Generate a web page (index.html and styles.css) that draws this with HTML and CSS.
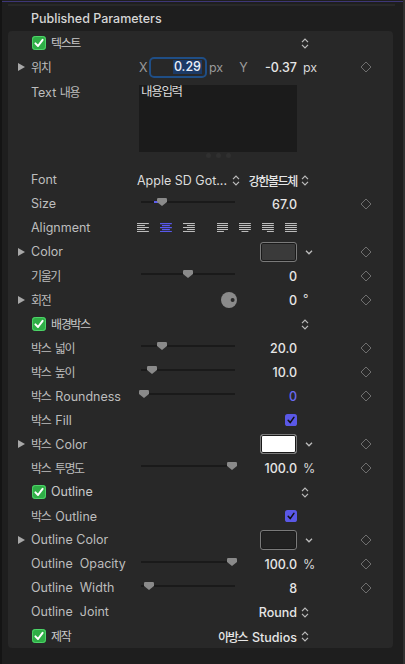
FILE: index.html
```html
<!DOCTYPE html>
<html lang="ko">
<head>
<meta charset="utf-8">
<link rel="stylesheet" href="styles.css">
</head>
<body>
<div class="frame">
  <div class="topline"></div>
  <div class="prevcard"></div>
  <div class="header">Published Parameters</div>
  <div class="card">

    <div class="row">
      <div class="lbl chk"><svg class="gcheck" width="14" height="14" viewBox="0 0 14 14"><rect x="0" y="0" width="14" height="14" rx="3.2" fill="#2fae46"/><rect x="0.5" y="0.5" width="13" height="13" rx="2.8" fill="none" stroke="#4fd46a" stroke-width="1"/><path d="M3.4 7.4 L6 10 L10.6 3.8" fill="none" stroke="#fff" stroke-width="2" stroke-linecap="round" stroke-linejoin="round"/></svg><span class="ko">텍스트</span></div>
      <div class="ext step"><svg width="8" height="11" viewBox="0 0 8 11"><path d="M1 4.2 L4 1.2 L7 4.2 M1 6.8 L4 9.8 L7 6.8" fill="none" stroke="#bdbdbd" stroke-width="1.2"/></svg></div>
    </div>

    <div class="row">
      <svg class="tri" width="7" height="8" viewBox="0 0 7 8"><path d="M0 0 L7 4 L0 8 Z" fill="#a8a8a8"/></svg>
      <div class="lbl"><span class="ko">위치</span></div>
      <div class="ctrl pos">
        <span class="axis">X</span>
        <span class="field"><span class="sel">0.29</span></span>
        <span class="unit">px</span>
        <span class="axis y">Y</span>
        <span class="val">-0.37</span>
      </div>
      <div class="ext">px</div>
      <div class="dia"><svg width="12" height="12" viewBox="0 0 12 12"><path d="M6 1 L11 6 L6 11 L1 6 Z" fill="none" stroke="#6e6e6e"/></svg></div>
    </div>

    <div class="textrow">
      <div class="lbl">Text <span class="ko">내용</span></div>
      <div class="tcol">
        <div class="tarea"><span class="ko tk">내용입력</span></div>
        <div class="dots"><i></i><i></i><i></i></div>
      </div>
    </div>

    <div class="row">
      <div class="lbl">Font</div>
      <div class="ctrl">
        <span class="pop">Apple SD Got...</span>
        <svg class="popchev" width="8" height="11" viewBox="0 0 8 11"><path d="M1 4.2 L4 1.2 L7 4.2 M1 6.8 L4 9.8 L7 6.8" fill="none" stroke="#bdbdbd" stroke-width="1.2"/></svg>
        <span class="val"><span class="ko">강한볼드체</span></span>
      </div>
      <div class="ext step"><svg width="8" height="11" viewBox="0 0 8 11"><path d="M1 4.2 L4 1.2 L7 4.2 M1 6.8 L4 9.8 L7 6.8" fill="none" stroke="#bdbdbd" stroke-width="1.2"/></svg></div>
    </div>

    <div class="row">
      <div class="lbl">Size</div>
      <div class="ctrl">
        <div class="slider"><div class="track"></div><div class="fill" style="left:13px;width:4px"></div><svg class="thumb" style="left:16px" width="10" height="8" viewBox="0 0 10 8"><path d="M0 1.2 Q0 0 1.2 0 H8.8 Q10 0 10 1.2 V4 L5 8 L0 4 Z" fill="#8a8a8a"/></svg></div>
        <span class="val">67.0</span>
      </div>
      <div class="dia"><svg width="12" height="12" viewBox="0 0 12 12"><path d="M6 1 L11 6 L6 11 L1 6 Z" fill="none" stroke="#6e6e6e"/></svg></div>
    </div>

    <div class="row">
      <div class="lbl">Alignment</div>
      <div class="ctrl align">
        <svg width="12" height="9" viewBox="0 0 12 9"><g fill="#c4c4c4"><rect x="0" y="0" width="12" height="1"/><rect x="0" y="2" width="8" height="1"/><rect x="0" y="4" width="12" height="1"/><rect x="0" y="6" width="8" height="1"/><rect x="0" y="8" width="12" height="1"/></g></svg>
        <svg width="12" height="9" viewBox="0 0 12 9"><g fill="#5b5bf5"><rect x="0" y="0" width="12" height="1.2"/><rect x="2" y="2" width="8" height="1.2"/><rect x="0" y="4" width="12" height="1.2"/><rect x="2" y="6" width="8" height="1.2"/><rect x="0" y="8" width="12" height="1"/></g></svg>
        <svg width="12" height="9" viewBox="0 0 12 9"><g fill="#c4c4c4"><rect x="0" y="0" width="12" height="1"/><rect x="4" y="2" width="8" height="1"/><rect x="0" y="4" width="12" height="1"/><rect x="4" y="6" width="8" height="1"/><rect x="0" y="8" width="12" height="1"/></g></svg>
        <svg class="grp" width="12" height="9" viewBox="0 0 12 9"><g fill="#c4c4c4"><rect x="0" y="0" width="12" height="1"/><rect x="0" y="2" width="12" height="1"/><rect x="0" y="4" width="12" height="1"/><rect x="0" y="6" width="12" height="1"/><rect x="0" y="8" width="7" height="1"/></g></svg>
        <svg width="12" height="9" viewBox="0 0 12 9"><g fill="#c4c4c4"><rect x="0" y="0" width="12" height="1"/><rect x="0" y="2" width="12" height="1"/><rect x="0" y="4" width="12" height="1"/><rect x="0" y="6" width="12" height="1"/><rect x="2.5" y="8" width="7" height="1"/></g></svg>
        <svg width="12" height="9" viewBox="0 0 12 9"><g fill="#c4c4c4"><rect x="0" y="0" width="12" height="1"/><rect x="0" y="2" width="12" height="1"/><rect x="0" y="4" width="12" height="1"/><rect x="0" y="6" width="12" height="1"/><rect x="5" y="8" width="7" height="1"/></g></svg>
        <svg width="12" height="9" viewBox="0 0 12 9"><g fill="#c4c4c4"><rect x="0" y="0" width="12" height="1"/><rect x="0" y="2" width="12" height="1"/><rect x="0" y="4" width="12" height="1"/><rect x="0" y="6" width="12" height="1"/><rect x="0" y="8" width="12" height="1"/></g></svg>
      </div>
    </div>

    <div class="row">
      <svg class="tri" width="7" height="8" viewBox="0 0 7 8"><path d="M0 0 L7 4 L0 8 Z" fill="#a8a8a8"/></svg>
      <div class="lbl">Color</div>
      <div class="ctrl end"><span class="well" style="background:#3a3a3a"></span></div>
      <div class="ext down"><svg width="8" height="5" viewBox="0 0 8 5"><path d="M1 0.8 L4 3.8 L7 0.8" fill="none" stroke="#bdbdbd" stroke-width="1.3"/></svg></div>
      <div class="dia"><svg width="12" height="12" viewBox="0 0 12 12"><path d="M6 1 L11 6 L6 11 L1 6 Z" fill="none" stroke="#6e6e6e"/></svg></div>
    </div>

    <div class="row">
      <div class="lbl"><span class="ko">기울기</span></div>
      <div class="ctrl">
        <div class="slider"><div class="track"></div><svg class="thumb" style="left:42px" width="10" height="8" viewBox="0 0 10 8"><path d="M0 1.2 Q0 0 1.2 0 H8.8 Q10 0 10 1.2 V4 L5 8 L0 4 Z" fill="#8a8a8a"/></svg></div>
        <span class="val">0</span>
      </div>
      <div class="dia"><svg width="12" height="12" viewBox="0 0 12 12"><path d="M6 1 L11 6 L6 11 L1 6 Z" fill="none" stroke="#6e6e6e"/></svg></div>
    </div>

    <div class="row">
      <svg class="tri" width="7" height="8" viewBox="0 0 7 8"><path d="M0 0 L7 4 L0 8 Z" fill="#a8a8a8"/></svg>
      <div class="lbl"><span class="ko">회전</span></div>
      <div class="ctrl">
        <svg class="dial" width="16" height="16" viewBox="0 0 16 16"><circle cx="8" cy="8" r="8" fill="#8a8a8a"/><circle cx="11.6" cy="8" r="2" fill="#2a2a2a"/></svg>
        <span class="val">0</span>
      </div>
      <div class="ext deg">°</div>
      <div class="dia"><svg width="12" height="12" viewBox="0 0 12 12"><path d="M6 1 L11 6 L6 11 L1 6 Z" fill="none" stroke="#6e6e6e"/></svg></div>
    </div>

    <div class="row">
      <div class="lbl chk"><svg class="gcheck" width="14" height="14" viewBox="0 0 14 14"><rect x="0" y="0" width="14" height="14" rx="3.2" fill="#2fae46"/><rect x="0.5" y="0.5" width="13" height="13" rx="2.8" fill="none" stroke="#4fd46a" stroke-width="1"/><path d="M3.4 7.4 L6 10 L10.6 3.8" fill="none" stroke="#fff" stroke-width="2" stroke-linecap="round" stroke-linejoin="round"/></svg><span class="ko">배경박스</span></div>
      <div class="ext step"><svg width="8" height="11" viewBox="0 0 8 11"><path d="M1 4.2 L4 1.2 L7 4.2 M1 6.8 L4 9.8 L7 6.8" fill="none" stroke="#bdbdbd" stroke-width="1.2"/></svg></div>
    </div>

    <div class="row">
      <div class="lbl"><span class="ko">박스 넓이</span></div>
      <div class="ctrl">
        <div class="slider"><div class="track"></div><svg class="thumb" style="left:16px" width="10" height="8" viewBox="0 0 10 8"><path d="M0 1.2 Q0 0 1.2 0 H8.8 Q10 0 10 1.2 V4 L5 8 L0 4 Z" fill="#8a8a8a"/></svg></div>
        <span class="val">20.0</span>
      </div>
      <div class="dia"><svg width="12" height="12" viewBox="0 0 12 12"><path d="M6 1 L11 6 L6 11 L1 6 Z" fill="none" stroke="#6e6e6e"/></svg></div>
    </div>

    <div class="row">
      <div class="lbl"><span class="ko">박스 높이</span></div>
      <div class="ctrl">
        <div class="slider"><div class="track"></div><svg class="thumb" style="left:6px" width="10" height="8" viewBox="0 0 10 8"><path d="M0 1.2 Q0 0 1.2 0 H8.8 Q10 0 10 1.2 V4 L5 8 L0 4 Z" fill="#8a8a8a"/></svg></div>
        <span class="val">10.0</span>
      </div>
      <div class="dia"><svg width="12" height="12" viewBox="0 0 12 12"><path d="M6 1 L11 6 L6 11 L1 6 Z" fill="none" stroke="#6e6e6e"/></svg></div>
    </div>

    <div class="row">
      <div class="lbl"><span class="ko pre">박스</span> Roundness</div>
      <div class="ctrl">
        <div class="slider"><div class="track"></div><svg class="thumb" style="left:-2px" width="10" height="8" viewBox="0 0 10 8"><path d="M0 1.2 Q0 0 1.2 0 H8.8 Q10 0 10 1.2 V4 L5 8 L0 4 Z" fill="#8a8a8a"/></svg></div>
        <span class="val blue">0</span>
      </div>
      <div class="dia"><svg width="12" height="12" viewBox="0 0 12 12"><path d="M6 1 L11 6 L6 11 L1 6 Z" fill="none" stroke="#6e6e6e"/></svg></div>
    </div>

    <div class="row">
      <div class="lbl"><span class="ko pre">박스</span> Fill</div>
      <div class="ctrl end"><svg width="12" height="12" viewBox="0 0 12 12"><rect x="0" y="0" width="12" height="12" rx="2.6" fill="#5a58e6"/><path d="M3.2 6.3 L5.2 8.6 L8.9 3.4" fill="none" stroke="#111" stroke-width="1.6" stroke-linecap="round" stroke-linejoin="round"/></svg></div>
    </div>

    <div class="row">
      <svg class="tri" width="7" height="8" viewBox="0 0 7 8"><path d="M0 0 L7 4 L0 8 Z" fill="#a8a8a8"/></svg>
      <div class="lbl"><span class="ko pre">박스</span> Color</div>
      <div class="ctrl end"><span class="well" style="background:#ffffff"></span></div>
      <div class="ext down"><svg width="8" height="5" viewBox="0 0 8 5"><path d="M1 0.8 L4 3.8 L7 0.8" fill="none" stroke="#bdbdbd" stroke-width="1.3"/></svg></div>
      <div class="dia"><svg width="12" height="12" viewBox="0 0 12 12"><path d="M6 1 L11 6 L6 11 L1 6 Z" fill="none" stroke="#6e6e6e"/></svg></div>
    </div>

    <div class="row">
      <div class="lbl"><span class="ko">박스 투명도</span></div>
      <div class="ctrl">
        <div class="slider"><div class="track"></div><svg class="thumb" style="left:86px" width="10" height="8" viewBox="0 0 10 8"><path d="M0 1.2 Q0 0 1.2 0 H8.8 Q10 0 10 1.2 V4 L5 8 L0 4 Z" fill="#8a8a8a"/></svg></div>
        <span class="val">100.0</span>
      </div>
      <div class="ext">%</div>
      <div class="dia"><svg width="12" height="12" viewBox="0 0 12 12"><path d="M6 1 L11 6 L6 11 L1 6 Z" fill="none" stroke="#6e6e6e"/></svg></div>
    </div>

    <div class="row">
      <div class="lbl chk"><svg class="gcheck" width="14" height="14" viewBox="0 0 14 14"><rect x="0" y="0" width="14" height="14" rx="3.2" fill="#2fae46"/><rect x="0.5" y="0.5" width="13" height="13" rx="2.8" fill="none" stroke="#4fd46a" stroke-width="1"/><path d="M3.4 7.4 L6 10 L10.6 3.8" fill="none" stroke="#fff" stroke-width="2" stroke-linecap="round" stroke-linejoin="round"/></svg>Outline</div>
      <div class="ext step"><svg width="8" height="11" viewBox="0 0 8 11"><path d="M1 4.2 L4 1.2 L7 4.2 M1 6.8 L4 9.8 L7 6.8" fill="none" stroke="#bdbdbd" stroke-width="1.2"/></svg></div>
    </div>

    <div class="row">
      <div class="lbl"><span class="ko pre">박스</span> Outline</div>
      <div class="ctrl end"><svg width="12" height="12" viewBox="0 0 12 12"><rect x="0" y="0" width="12" height="12" rx="2.6" fill="#5a58e6"/><path d="M3.2 6.3 L5.2 8.6 L8.9 3.4" fill="none" stroke="#111" stroke-width="1.6" stroke-linecap="round" stroke-linejoin="round"/></svg></div>
    </div>

    <div class="row">
      <svg class="tri" width="7" height="8" viewBox="0 0 7 8"><path d="M0 0 L7 4 L0 8 Z" fill="#a8a8a8"/></svg>
      <div class="lbl">Outline Color</div>
      <div class="ctrl end"><span class="well" style="background:#222222"></span></div>
      <div class="ext down"><svg width="8" height="5" viewBox="0 0 8 5"><path d="M1 0.8 L4 3.8 L7 0.8" fill="none" stroke="#bdbdbd" stroke-width="1.3"/></svg></div>
      <div class="dia"><svg width="12" height="12" viewBox="0 0 12 12"><path d="M6 1 L11 6 L6 11 L1 6 Z" fill="none" stroke="#6e6e6e"/></svg></div>
    </div>

    <div class="row">
      <div class="lbl">Outline&nbsp; Opacity</div>
      <div class="ctrl">
        <div class="slider"><div class="track"></div><svg class="thumb" style="left:86px" width="10" height="8" viewBox="0 0 10 8"><path d="M0 1.2 Q0 0 1.2 0 H8.8 Q10 0 10 1.2 V4 L5 8 L0 4 Z" fill="#8a8a8a"/></svg></div>
        <span class="val">100.0</span>
      </div>
      <div class="ext">%</div>
      <div class="dia"><svg width="12" height="12" viewBox="0 0 12 12"><path d="M6 1 L11 6 L6 11 L1 6 Z" fill="none" stroke="#6e6e6e"/></svg></div>
    </div>

    <div class="row">
      <div class="lbl">Outline&nbsp; Width</div>
      <div class="ctrl">
        <div class="slider"><div class="track"></div><svg class="thumb" style="left:3px" width="10" height="8" viewBox="0 0 10 8"><path d="M0 1.2 Q0 0 1.2 0 H8.8 Q10 0 10 1.2 V4 L5 8 L0 4 Z" fill="#8a8a8a"/></svg></div>
        <span class="val">8</span>
      </div>
      <div class="dia"><svg width="12" height="12" viewBox="0 0 12 12"><path d="M6 1 L11 6 L6 11 L1 6 Z" fill="none" stroke="#6e6e6e"/></svg></div>
    </div>

    <div class="row">
      <div class="lbl">Outline&nbsp; Joint</div>
      <div class="ctrl"><span class="val">Round</span></div>
      <div class="ext step"><svg width="8" height="11" viewBox="0 0 8 11"><path d="M1 4.2 L4 1.2 L7 4.2 M1 6.8 L4 9.8 L7 6.8" fill="none" stroke="#bdbdbd" stroke-width="1.2"/></svg></div>
    </div>

    <div class="row">
      <div class="lbl chk"><svg class="gcheck" width="14" height="14" viewBox="0 0 14 14"><rect x="0" y="0" width="14" height="14" rx="3.2" fill="#2fae46"/><rect x="0.5" y="0.5" width="13" height="13" rx="2.8" fill="none" stroke="#4fd46a" stroke-width="1"/><path d="M3.4 7.4 L6 10 L10.6 3.8" fill="none" stroke="#fff" stroke-width="2" stroke-linecap="round" stroke-linejoin="round"/></svg><span class="ko">제작</span></div>
      <div class="ctrl"><span class="val"><span class="ko pre">아방스</span> Studios</span></div>
      <div class="ext step"><svg width="8" height="11" viewBox="0 0 8 11"><path d="M1 4.2 L4 1.2 L7 4.2 M1 6.8 L4 9.8 L7 6.8" fill="none" stroke="#bdbdbd" stroke-width="1.2"/></svg></div>
    </div>

  </div>
</div>
</body>
</html>
```

FILE: styles.css
```css
* { box-sizing: border-box; }
html, body { margin: 0; padding: 0; }
body {
  background: #1e1e1e;
  font-family: "Inter", "Noto Sans CJK KR", sans-serif;
  font-size: 12.5px;
  color: #bdbdbd;
}
.frame {
  width: 405px;
  height: 664px;
  border-left: 2px solid #141414;
  border-right: 2px solid #303030;
  overflow: hidden;
  padding-top: 1px;
}
.topline { height: 1px; background: #3d3676; }
.prevcard {
  margin: 2px 8px 0 6px;
  height: 2px;
  background: #282828;
}
.header {
  height: 25px;
  line-height: 25px;
  padding-left: 29px;
  color: #d6d6d6;
  font-weight: 500;
}
.card {
  margin-left: 6px;
  width: 385px;
  background: #282828;
  border-radius: 4px;
}
.ko {
  font-family: "Noto Sans CJK KR", sans-serif;
  font-size: 12px;
  letter-spacing: -1.4px;
  word-spacing: 2.5px;
}
.ko.pre { margin-right: 1.5px; }
.row {
  display: grid;
  grid-template-columns: 23px 108px 158px 26px 1fr 18px;
  padding-right: 18px;
  height: 24px;
  align-items: center;
}
.tri { grid-column: 1; grid-row: 1; margin-left: 10px; }
.lbl { grid-column: 2; grid-row: 1; white-space: nowrap; line-height: 16px; }
.lbl.chk { display: flex; align-items: center; gap: 5px; margin-left: 1px; color: #c8c8c8; }
.ctrl { grid-column: 3; grid-row: 1; display: flex; align-items: center; height: 24px; }
.ctrl.end { justify-content: flex-end; }
.ext { grid-column: 4; grid-row: 1; padding-left: 6px; color: #d8d8d8; display: flex; align-items: center; }
.ext.step { padding-left: 4px; }
.ext.down { padding-left: 8px; }
.ext.deg { padding-left: 6px; font-size: 12px; margin-top: -4px; }
.dia { grid-column: 6; grid-row: 1; display: flex; justify-content: center; align-items: center; }
.val { flex: 1; text-align: right; color: #e6e6e6; font-weight: 500; white-space: nowrap; }
.val.blue { color: #6a6af0; }

.pos .axis { width: 10px; color: #9a9a9a; }
.pos .axis.y { width: auto; margin-left: 16px; }
.field {
  width: 58px;
  height: 21px;
  border: 2px solid #1f4e86;
  border-radius: 5px;
  display: flex;
  align-items: center;
  justify-content: flex-end;
  padding-right: 3px;
}
.sel { background: #1c3a66; color: #e8eef8; font-weight: 500; padding: 0 1px; line-height: 14px; }
.unit { margin-left: 2px; color: #9a9a9a; }

.textrow {
  display: grid;
  grid-template-columns: 23px 108px 158px;
  height: 89px;
}
.textrow .lbl { grid-column: 2; padding-top: 5px; }
.tcol { grid-column: 3; padding-top: 6px; }
.tarea {
  height: 67px;
  background: #1b1b1b;
  padding: 0 2px;
  line-height: 11px;
  color: #dcdcdc;
}
.tk { font-size: 12.5px; letter-spacing: -1.3px; }
.dots { display: flex; justify-content: center; gap: 5px; margin-top: 1px; }
.dots i { width: 5px; height: 5px; border-radius: 50%; background: #303030; display: block; }

.pop { margin-left: -2px; color: #dcdcdc; white-space: nowrap; }
.popchev { margin-left: 5px; }

.slider { position: relative; width: 94px; height: 9px; margin-left: 2px; margin-bottom: 4px; }
.track { position: absolute; left: 0; right: 0; top: 3px; height: 2px; background: #1a1a1a; }
.fill { position: absolute; top: 3px; height: 2px; background: #5c5cec; }
.thumb { position: absolute; top: 0; display: block; }

.align { gap: 11px; margin-left: -2px; }
.align svg { display: block; margin-top: -1px; }
.align .grp { margin-left: 11px; }

.well {
  width: 37px;
  height: 20px;
  border: 1px solid #7a7a7a;
  border-radius: 3px;
  box-shadow: inset 0 0 0 1px #1a1a1a;
  display: block;
}
.dial { margin-left: 82px; display: block; }
```
